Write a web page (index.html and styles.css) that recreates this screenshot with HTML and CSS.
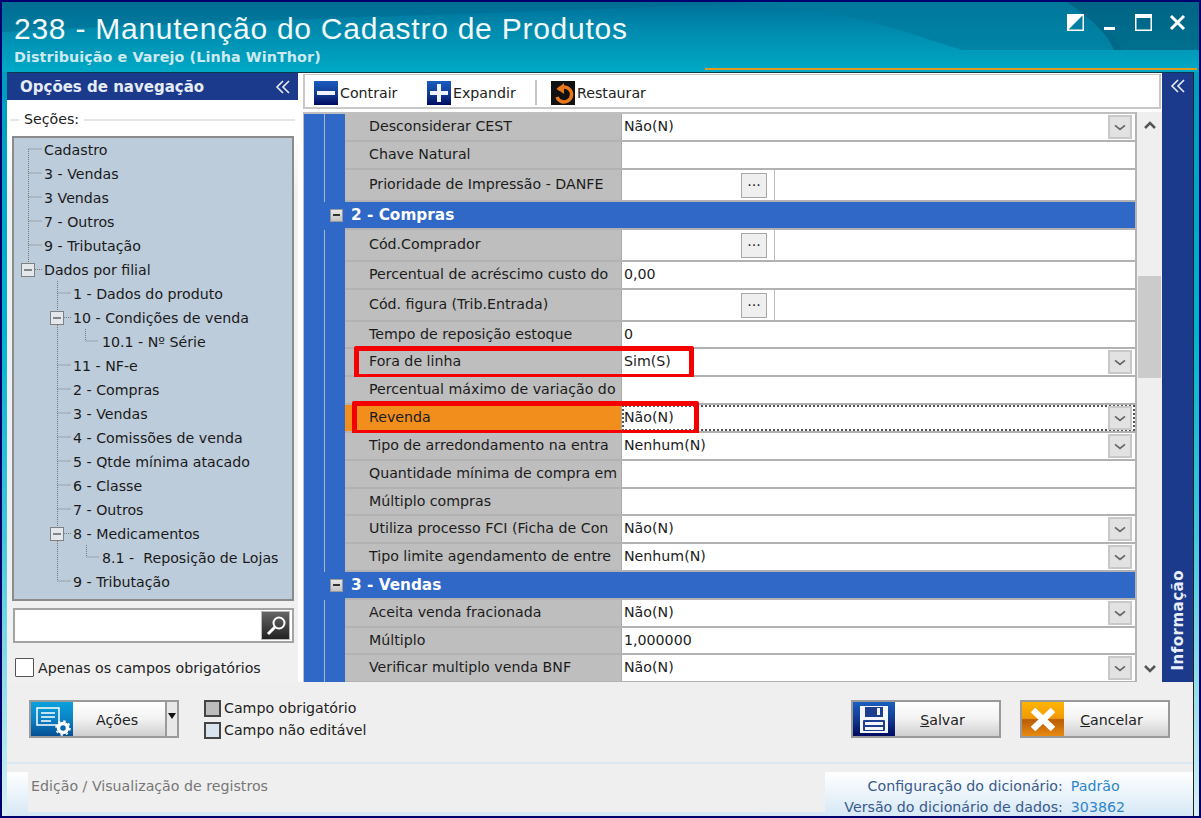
FILE: index.html
```html
<!DOCTYPE html>
<html lang="pt">
<head>
<meta charset="utf-8">
<title>238 - Manutenção do Cadastro de Produtos</title>
<link rel="stylesheet" href="styles.css">
</head>
<body>
<svg class="defs" width="0" height="0">
  <symbol id="chev" viewBox="0 0 24 24"><path d="M6 10l6 5 6-5" fill="none" stroke="#666" stroke-width="2"/></symbol>
  <symbol id="dbl" viewBox="0 0 16 14"><path d="M8 1L2 7l6 6M14 1L8 7l6 6" fill="none" stroke="#e8ecf6" stroke-width="1.6"/></symbol>
</svg>
<div class="window">
  <header class="header">
    <svg class="swoosh" viewBox="0 0 1197 68" preserveAspectRatio="none">
      <path d="M740 0C860 10 900 30 960 48L1120 48C1110 25 1080 10 1065 0Z" fill="#007a9c" opacity=".7"/>
      <path d="M1065 0C1085 14 1105 30 1112 48L1197 48V0Z" fill="#00607f" opacity=".75"/>
      <path d="M0 0H740C600 10 300 14 0 30Z" fill="#00688c" opacity=".45"/>
    </svg>
    <div class="titles">
      <h1 class="title">238 - Manutenção do Cadastro de Produtos</h1>
      <p class="subtitle">Distribuição e Varejo (Linha WinThor)</p>
    </div>
    <div class="winbtns">
      <svg class="wb" viewBox="0 0 17 17"><rect x=".75" y=".75" width="15.5" height="15.5" fill="none" stroke="#fff" stroke-width="1.5"/><path d="M1 16V1H16Z" fill="#fff"/></svg>
      <svg class="wb" viewBox="0 0 17 17"><rect x="3" y="13" width="11" height="3" fill="#fff"/></svg>
      <svg class="wb" viewBox="0 0 17 17"><rect x=".75" y=".75" width="15.5" height="15.5" fill="none" stroke="#fff" stroke-width="1.5"/><rect x="1" y="1" width="15" height="3" fill="#fff"/></svg>
      <svg class="wb" viewBox="0 0 17 17"><path d="M2 2l13 13M15 2L2 15" stroke="#fff" stroke-width="3"/></svg>
    </div>
    <div class="accent"></div>
  </header>

  <div class="content">
    <div class="workspace">
      <aside class="nav">
        <div class="nav-head"><span>Opções de navegação</span><svg class="dbl" width="16" height="14"><use href="#dbl"/></svg></div>
        <fieldset class="group">
          <legend>Seções:</legend>
          <div class="tree">
            <svg class="tree-lines" width="279" height="462">
              <g stroke="#777" stroke-dasharray="1 1" fill="none">
                <path d="M14.500 12V127M14.500 12H28M14.500 36H28M14.500 60H28M14.500 84H28M14.500 108H28M21 132.500H28"/>
                <path d="M43.500 144V444M43.500 156H57M50 180.500H57M71.500 192V204H84M43.500 228H57M43.500 252H57M43.500 276H57M43.500 300H57M43.500 324H57M43.500 348H57M43.500 372H57M50 396.500H57M72.500 408V420H85M43.500 444H57"/>
              </g>
              <g>
                <rect x="7.500" y="126.500" width="13" height="13" fill="#e4e8ec" stroke="#808080"/><path d="M10 133h8" stroke="#222"/>
                <rect x="36.500" y="174.500" width="13" height="13" fill="#e4e8ec" stroke="#808080"/><path d="M39 181h8" stroke="#222"/>
                <rect x="36.500" y="390.500" width="13" height="13" fill="#e4e8ec" stroke="#808080"/><path d="M39 397h8" stroke="#222"/>
              </g>
            </svg>
            <ul class="tree-list">
              <li class="l0">Cadastro</li>
              <li class="l0">3 - Vendas</li>
              <li class="l0">3 Vendas</li>
              <li class="l0">7 - Outros</li>
              <li class="l0">9 - Tributação</li>
              <li class="l0">Dados por filial</li>
              <li class="l1">1 - Dados do produto</li>
              <li class="l1">10 - Condições de venda</li>
              <li class="l2">10.1 - Nº Série</li>
              <li class="l1">11 - NF-e</li>
              <li class="l1">2 - Compras</li>
              <li class="l1">3 - Vendas</li>
              <li class="l1">4 - Comissões de venda</li>
              <li class="l1">5 - Qtde mínima atacado</li>
              <li class="l1">6 - Classe</li>
              <li class="l1">7 - Outros</li>
              <li class="l1">8 - Medicamentos</li>
              <li class="l2">8.1 -  Reposição de Lojas</li>
              <li class="l1">9 - Tributação</li>
            </ul>
          </div>
        </fieldset>
        <div class="search">
          <span class="search-btn"><svg width="26" height="26" viewBox="0 0 26 26"><circle cx="16" cy="10" r="5.500" fill="none" stroke="#fff" stroke-width="2"/><path d="M12 14l-7 7" stroke="#fff" stroke-width="3"/></svg></span>
        </div>
        <label class="only"><span class="box"></span>Apenas os campos obrigatórios</label>
      </aside>

      <main class="center">
        <div class="toolbar">
          <span class="tool tool-a"><svg class="ti" viewBox="0 0 24 24"><rect width="24" height="24" fill="url(#gb)"/><defs><linearGradient id="gb" x1="0" y1="0" x2="0" y2="1"><stop offset="0" stop-color="#1a5cc0"/><stop offset=".55" stop-color="#123a90"/><stop offset="1" stop-color="#000a60"/></linearGradient></defs><rect x="3" y="10" width="18" height="4" fill="#f0f4ff"/></svg>Contrair</span>
          <span class="tool tool-b"><svg class="ti" viewBox="0 0 24 24"><rect width="24" height="24" fill="url(#gb)"/><path d="M3 10h7V3h4v7h7v4h-7v7h-4v-7H3z" fill="#f0f4ff"/></svg>Expandir</span>
          <span class="tsep"></span>
          <span class="tool"><svg class="ti" viewBox="0 0 24 24"><rect width="24" height="24" fill="#111"/><path d="M7 9a7.500 7.500 0 1 1-1 7" fill="none" stroke="#e8761a" stroke-width="3.500"/><path d="M13 2v11L6 8z" fill="#e8761a"/></svg>Restaurar</span>
        </div>
        <div class="grid-wrap">
          <div class="grid">
            <div class="row"><div class="lab">Desconsiderar CEST</div><div class="val">Não(N)<span class="drop"><svg><use href="#chev"/></svg></span></div></div>
            <div class="row"><div class="lab">Chave Natural</div><div class="val"></div></div>
            <div class="row tall"><div class="lab">Prioridade de Impressão - DANFE</div><div class="val"><span class="more">...</span></div></div>
            <div class="row sec"><span class="exp"></span>2 - Compras</div>
            <div class="row tall"><div class="lab">Cód.Comprador</div><div class="val"><span class="more">...</span></div></div>
            <div class="row"><div class="lab">Percentual de acréscimo custo do</div><div class="val">0,00</div></div>
            <div class="row tall"><div class="lab">Cód. figura (Trib.Entrada)</div><div class="val"><span class="more">...</span></div></div>
            <div class="row short"><div class="lab">Tempo de reposição estoque</div><div class="val">0</div></div>
            <div class="row"><div class="lab">Fora de linha</div><div class="val">Sim(S)<span class="drop"><svg><use href="#chev"/></svg></span></div><span class="mark mark-a"></span></div>
            <div class="row"><div class="lab">Percentual máximo de variação do</div><div class="val"></div></div>
            <div class="row"><div class="lab lab-on">Revenda</div><div class="val val-on">Não(N)<span class="drop"><svg><use href="#chev"/></svg></span></div><span class="mark mark-b"></span></div>
            <div class="row"><div class="lab">Tipo de arredondamento na entra</div><div class="val">Nenhum(N)<span class="drop"><svg><use href="#chev"/></svg></span></div></div>
            <div class="row"><div class="lab">Quantidade mínima de compra em</div><div class="val"></div></div>
            <div class="row short"><div class="lab">Múltiplo compras</div><div class="val"></div></div>
            <div class="row"><div class="lab">Utiliza processo FCI (Ficha de Con</div><div class="val">Não(N)<span class="drop"><svg><use href="#chev"/></svg></span></div></div>
            <div class="row"><div class="lab">Tipo limite agendamento de entre</div><div class="val">Nenhum(N)<span class="drop"><svg><use href="#chev"/></svg></span></div></div>
            <div class="row sec"><span class="exp"></span>3 - Vendas</div>
            <div class="row"><div class="lab">Aceita venda fracionada</div><div class="val">Não(N)<span class="drop"><svg><use href="#chev"/></svg></span></div></div>
            <div class="row short"><div class="lab">Múltiplo</div><div class="val">1,000000</div></div>
            <div class="row"><div class="lab">Verificar multiplo venda BNF</div><div class="val">Não(N)<span class="drop"><svg><use href="#chev"/></svg></span></div></div>
          </div>
          <div class="scroll">
            <svg class="sarrow" viewBox="0 0 14 10"><path d="M2 8l5-5 5 5" fill="none" stroke="#555" stroke-width="2.500"/></svg>
            <span class="thumb"></span>
            <svg class="sarrow sdown" viewBox="0 0 14 10"><path d="M2 2l5 5 5-5" fill="none" stroke="#555" stroke-width="2.500"/></svg>
          </div>
        </div>
      </main>

      <aside class="rail">
        <svg class="dbl" width="16" height="14"><use href="#dbl"/></svg>
        <span class="rail-text">Informação</span>
      </aside>
    </div>

    <div class="actions">
      <div class="btn btn-acoes">
        <span class="bico bico-blue"><svg width="42" height="35" viewBox="0 0 42 35"><rect x="6" y="6" width="22" height="17" fill="none" stroke="#fff" stroke-width="1.500"/><path d="M10 11h14M10 15h14M10 19h10" stroke="#fff" stroke-width="1.500"/><circle cx="32" cy="26" r="4.500" fill="none" stroke="#fff" stroke-width="3.500"/><circle cx="32" cy="26" r="7" fill="none" stroke="#fff" stroke-width="1.500" stroke-dasharray="2.500 3"/></svg></span>
        <span class="blabel">Ações</span>
        <span class="caret"><svg width="8" height="6" viewBox="0 0 8 6"><path d="M0 0h8L4 6z" fill="#111"/></svg></span>
      </div>
      <div class="legend">
        <div class="legend-row"><span class="sw sw-req"></span>Campo obrigatório</div>
        <div class="legend-row"><span class="sw sw-ro"></span>Campo não editável</div>
      </div>
      <div class="btn btn-main btn-save">
        <span class="bico bico-navy"><svg width="42" height="35" viewBox="0 0 42 35"><path d="M7 4h28v27H7z" fill="#f4f6fb"/><rect x="12" y="5" width="18" height="10" fill="#1c3f90"/><rect x="24" y="6" width="3" height="7" fill="#f4f6fb"/><rect x="10" y="18" width="22" height="11" rx="1" fill="#1c3f90"/><rect x="12" y="20" width="18" height="3" fill="#f4f6fb"/><rect x="12" y="25" width="18" height="3" fill="#f4f6fb"/></svg></span>
        <span class="blabel"><u>S</u>alvar</span>
      </div>
      <div class="btn btn-main btn-cancel">
        <span class="bico bico-orange"><svg width="42" height="35" viewBox="0 0 42 35"><path d="M11 8l20 19M31 8L11 27" stroke="#fff" stroke-width="6.500"/></svg></span>
        <span class="blabel"><u>C</u>ancelar</span>
      </div>
    </div>

    <footer class="status">
      <div class="status-left">Edição / Visualização de registros</div>
      <dl class="status-right">
        <dt>Configuração do dicionário:</dt><dd>Padrão</dd>
        <dt>Versão do dicionário de dados:</dt><dd>303862</dd>
      </dl>
    </footer>
  </div>
</div>
</body>
</html>
```
FILE: styles.css
```css
* { box-sizing: border-box; }
html, body { margin: 0; padding: 0; }
body {
  width: 1201px;
  height: 818px;
  overflow: hidden;
  font-family: "DejaVu Sans", "Liberation Sans", sans-serif;
  font-size: 14.2px;
  color: #222;
}
.defs { display: block; position: absolute; }
.window {
  height: 818px;
  display: flex;
  flex-direction: column;
  border: 2px solid #00006e;
  background: linear-gradient(180deg, #0096b8 0, #00b4cc 40%, #40c8d8 65%, #d8f2f6 100%);
}
.header {
  position: relative;
  height: 70px;
  flex: none;
  display: flex;
  justify-content: space-between;
  padding: 9px 9px 0 12px;
  background: linear-gradient(180deg, #00709a 0, #0088ac 35%, #009cbc 75%, #00aac6 100%);
}
.swoosh { position: absolute; left: 0; top: 0; width: 100%; height: 68px; }
.titles { position: relative; }
.title {
  margin: 0;
  font: 400 30px/36px "Liberation Sans", Arial, sans-serif;
  letter-spacing: .75px;
  color: #f2f9fb;
}
.subtitle {
  margin: 0;
  font: 700 14.3px/20px "DejaVu Sans", sans-serif;
  letter-spacing: .1px;
  color: #cdeaf0;
}
.winbtns { position: relative; display: flex; gap: 17px; padding-top: 3px; margin-right: 4px; }
.wb { width: 17px; height: 17px; }
.accent {
  position: absolute;
  left: 703px;
  right: 2px;
  top: 66px;
  height: 2px;
  background: #e09a20;
}

.content {
  flex: 1;
  margin: 0 5px;
  display: flex;
  flex-direction: column;
  background: #efefef;
  border-top: 1px solid #0a3a50;
  border-right: 1px solid #222;
  min-height: 0;
}
.workspace { height: 609px; flex: none; display: flex; background: #fff; }

.nav {
  width: 291px;
  flex: none;
  background: linear-gradient(180deg, #fff 0, #fff 10%, #f0f0f0 20%, #f0f0f0 100%);
}
.nav-head {
  height: 27px;
  display: flex;
  align-items: center;
  justify-content: space-between;
  padding: 0 7px 0 13px;
  background: #1b3a8c;
  color: #e6ecf6;
  font-weight: 700;
  font-size: 15px;
}
.group {
  margin: 11px 3px 0 3px;
  padding: 0 0 0 2px;
  border: 0;
  border-top: 2px solid #e6e6e6;
  min-width: 0;
}
.group legend {
  margin-left: 7px;
  padding: 0 5px;
  line-height: 17px;
}
.tree {
  position: relative;
  width: 282px;
  height: 465px;
  background: #bdccdb;
  border: 2px solid #8b8b8b;
  margin-top: 8px;
}
.tree-lines { position: absolute; left: 0; top: -1px; }
.tree-list { list-style: none; margin: 0; padding: 0; }
.tree-list li { height: 24px; line-height: 24px; white-space: pre; color: #1a1a1a; }
.l0 { padding-left: 30px; }
.l1 { padding-left: 59px; }
.l2 { padding-left: 88px; }

.search {
  margin: 7px 3px 0 6px;
  width: 281px;
  height: 35px;
  display: flex;
  justify-content: flex-end;
  align-items: center;
  padding-right: 2px;
  background: #fff;
  border: 2px solid #a4a4a4;
}
.search-btn {
  width: 29px;
  height: 29px;
  display: flex;
  align-items: center;
  justify-content: center;
  border: 1px solid #bbb;
  background: linear-gradient(180deg, #666 0, #444 50%, #222 100%);
}
.only { display: flex; align-items: center; gap: 4px; margin: 15px 0 0 8px; color: #222; }
.box { width: 19px; height: 19px; background: #fff; border: 1.500px solid #555; border-radius: 1px; }

.center { flex: 1; min-width: 0; padding: 1px 0 0 5px; background: #fff; display: flex; flex-direction: column; }
.toolbar {
  height: 35px;
  flex: none;
  display: flex;
  align-items: center;
  padding: 3px 0 0 9px;
  background: #fff;
  border: 2px solid #c8c8c8;
  border-top-width: 1px;
  margin-right: 1px;
}
.tool { display: flex; align-items: center; gap: 2px; }
.tool-a { width: 113px; }
.tool-b { width: 108px; }
.ti { width: 24px; height: 24px; }
.tsep { width: 2px; height: 25px; background: #c4c4c4; margin-right: 14px; }
.grid-wrap { flex: 1; min-height: 0; margin-top: 3px; display: flex; background: #efefef; overflow: hidden; }
.grid {
  width: 834px;
  flex: none;
  padding-left: 42px;
  border-top: 2px solid #c0c0c0;
  border-right: 2px solid #b4b4b4;
  background:
    linear-gradient(90deg, #c0c0c0 0 1px, #2f68c6 1px 21px, #a9b6c8 21px 22px, #2f68c6 22px 42px, transparent 42px);
}
.row { position: relative; display: flex; height: 28px; border-bottom: 2px solid #b2b2b2; background: #fff; }
.tall { height: 32px; }
.short { height: 27px; }
.lab {
  width: 277px;
  flex: none;
  overflow: hidden;
  white-space: nowrap;
  padding-left: 24px;
  line-height: 25px;
  background: #bebebe;
  border-right: 1px solid #aaa;
  color: #1c1c1c;
}
.tall .lab { line-height: 29px; }
.lab-on { background: #f28f1c; }
.val {
  flex: 1;
  min-width: 0;
  position: relative;
  display: flex;
  justify-content: space-between;
  padding-left: 2px;
  line-height: 25px;
  color: #1c1c1c;
}
.val-on { outline: 2px dotted #555; outline-offset: -2px; }
.drop {
  position: absolute;
  right: 3px;
  top: 1px;
  width: 24px;
  height: 24px;
  background: #e2e2e2;
  border: 2px solid #c8c8c8;
}
.drop svg { display: block; width: 20px; height: 20px; }
.more {
  margin-left: 117px;
  margin-top: 3px;
  width: 26px;
  height: 25px;
  line-height: 15px;
  text-align: center;
  background: #efefef;
  border: 1px solid #a8a8a8;
}
.tall .val { justify-content: flex-start; }
.tall .val::after { content: ""; margin-left: 7px; width: 1px; height: 100%; background: #bbb; }
.sec {
  height: 28px;
  display: block;
  margin-left: -21px;
  padding-left: 27px;
  line-height: 26px;
  color: #fff;
  font-weight: 700;
  font-size: 15.3px;
  background: #2f68c6;
  border-bottom: 0;
}
.sec::after { content: ""; position: absolute; left: 21px; right: 0; bottom: 0; height: 2px; background: #b2b2b2; }
.exp {
  position: absolute;
  left: 6px;
  top: 7px;
  width: 13px;
  height: 13px;
  background: linear-gradient(#e8e8e8, #c4c4c4);
  border: 1px solid #999;
}
.exp::after { content: ""; position: absolute; left: 2px; top: 4px; width: 7px; height: 2px; background: #333; }
.mark { position: absolute; border: 5px solid #f40000; border-radius: 2px; pointer-events: none; }
.mark-a { left: 9px; top: -3px; width: 340px; height: 33px; }
.mark-b { left: 7px; top: -4px; width: 347px; height: 34px; }
.scroll { flex: 1; position: relative; display: flex; flex-direction: column; align-items: center; padding-top: 8px; }
.sarrow { width: 14px; height: 10px; flex: none; }
.thumb { width: 23px; height: 102px; margin-top: 146px; background: #cbcbcb; flex: none; }
.sdown { margin-top: auto; margin-bottom: 8px; }

.rail {
  width: 31px;
  flex: none;
  display: flex;
  flex-direction: column;
  align-items: center;
  justify-content: space-between;
  padding: 6px 0 11px;
  background: #1b3a8c;
}
.rail-text {
  writing-mode: vertical-rl;
  transform: rotate(180deg);
  color: #e8eef8;
  font-weight: 700;
  font-size: 15px;
  letter-spacing: .5px;
}

.actions {
  height: 82px;
  flex: none;
  display: flex;
  padding: 18px 23px 0 22px;
  border-bottom: 2px solid #dbe8f2;
}
.btn {
  display: flex;
  height: 38px;
  background: linear-gradient(180deg, #fff 0, #f2f2f2 50%, #cfcfcf 100%);
  border: 2px solid #9a9a9a;
}
.bico { width: 42px; flex: none; height: 100%; display: block; overflow: hidden; }
.bico-blue { background: linear-gradient(180deg, #0aa0dc 0, #0a82c4 50%, #064f94 100%); }
.bico-navy { background: linear-gradient(180deg, #1860c0 0, #123a90 50%, #000a60 100%); }
.bico-orange { background: linear-gradient(180deg, #ffb400 0, #f09a08 48%, #b85c08 52%, #e88a10 100%); }
.blabel { flex: 1; text-align: center; line-height: 36px; color: #222; }
.btn-acoes { width: 150px; }
.btn-acoes .blabel { border-right: 2px solid #9a9a9a; padding-right: 4px; }
.caret { width: 10px; flex: none; display: flex; justify-content: center; padding-top: 11px; background: #e8e8e8; }
.legend { margin-left: 25px; display: flex; flex-direction: column; gap: 2px; margin-top: -2px; }
.legend-row { display: flex; align-items: center; gap: 3px; height: 20px; }
.sw { width: 17px; height: 17px; border: 2px solid #444; }
.sw-req { background: #bcbcbc; }
.sw-ro { background: #d8e4ef; }
.btn-main { width: 150px; }
.btn-save { margin-left: auto; }
.btn-cancel { margin-left: 19px; }
.btn-main .blabel { padding-right: 9px; }

.status {
  flex: 1;
  min-height: 0;
  margin-top: 8px;
  display: flex;
  justify-content: space-between;
  background: linear-gradient(180deg, #fff 0, #d6e8f6 100%);
}
.status-left {
  width: 797px;
  margin: 0 0 4px 21px;
  padding: 6px 0 0 3px;
  background: #efefef;
  color: #777;
}
.status-right {
  margin: 4px 68px 0 0;
  display: grid;
  grid-template-columns: auto auto;
  column-gap: 8px;
  grid-auto-rows: 21px;
  line-height: 21px;
}
.status-right dt { text-align: right; color: #3a5a8a; }
.status-right dd { margin: 0; color: #2e86c8; }
```
